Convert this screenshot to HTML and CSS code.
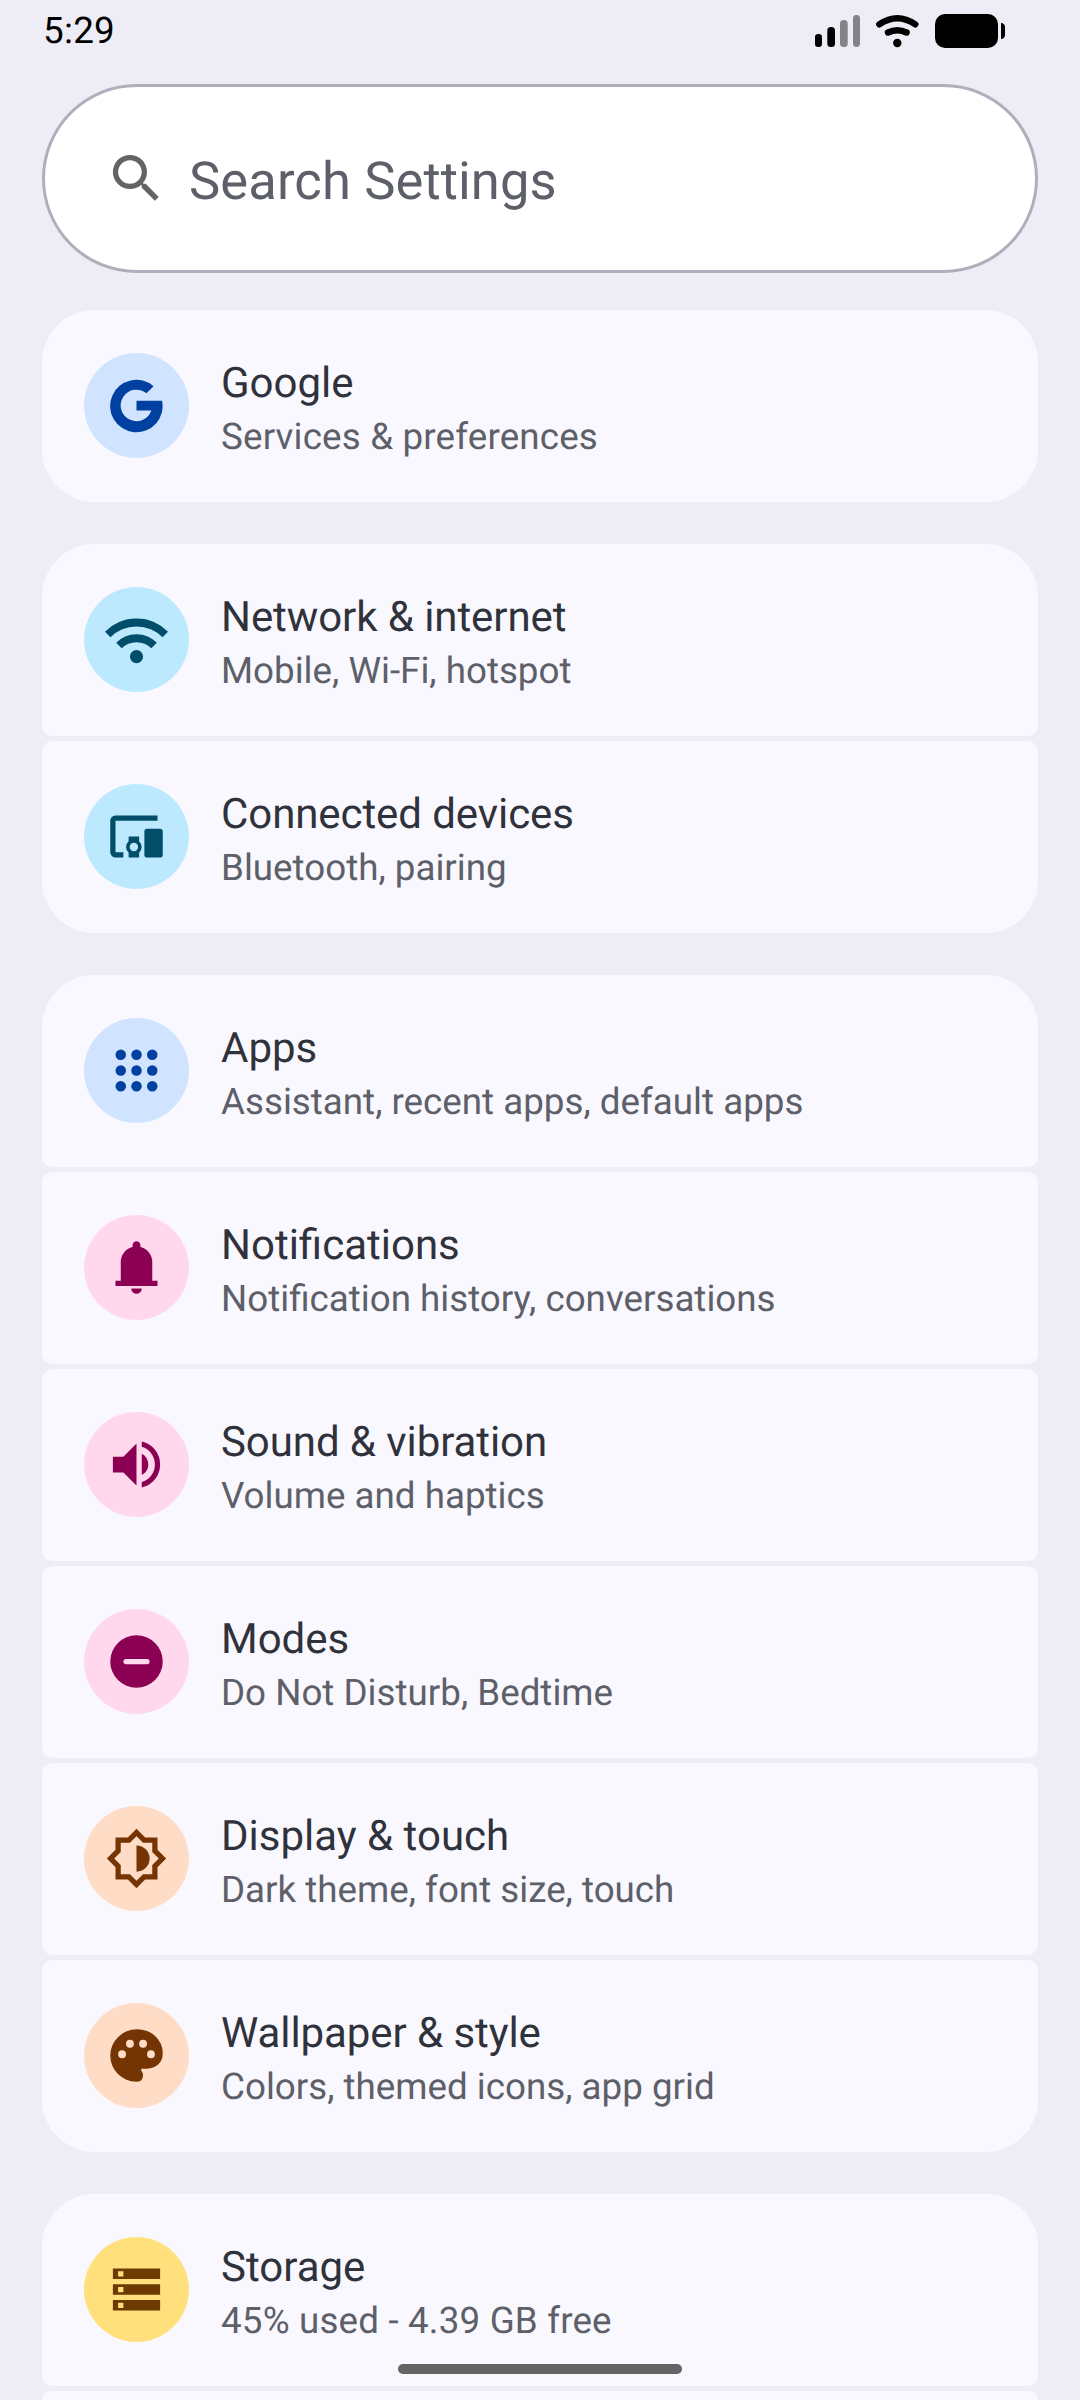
FILE: index.html
```html
<!DOCTYPE html>
<html lang="en">
<head>
<meta charset="utf-8">
<title>Settings</title>
<link rel="stylesheet" href="styles.css">
</head>
<body>
<header class="status">
  <span class="clock">5:29</span>
  <svg class="status-icons" viewBox="0 0 192 36" aria-hidden="true">
    <rect x="0" y="20" width="7" height="13" rx="3.2"/>
    <rect x="12.300" y="13" width="7.700" height="20" rx="3.500"/>
    <g fill="#858388"><rect x="25" y="6" width="7.700" height="27" rx="3.500"/><rect x="38" y="1" width="7" height="32" rx="3.400"/></g>
    <g fill="none" stroke="#000" stroke-width="6.400" stroke-linecap="round"><path d="M64.300 10.300q18-12.300 36 0"/><path d="M73 18.500q9.300-4.500 18.600 0"/></g>
    <circle cx="82.300" cy="29" r="4.200"/>
    <rect x="120" y="0" width="63" height="34" rx="10"/>
    <path d="M186 9c2.500 0 4 2 4 4v8c0 2-1.500 4-4 4z"/>
  </svg>
</header>
<main class="page">
  <div class="search">
    <svg class="icon" viewBox="0 0 24 24"><path d="M15.500 14h-.79l-.28-.27A6.471 6.471 0 0 0 16 9.500 6.500 6.500 0 1 0 9.500 16c1.610 0 3.090-.59 4.230-1.570l.27.28v.79l5 4.990L20.490 19l-4.990-5zm-6 0C7.010 14 5 11.990 5 9.500S7.010 5 9.500 5 14 7.010 14 9.500 11.990 14 9.500 14z"/></svg>
    <span class="search-text">Search Settings</span>
  </div>

  <section class="group">
    <div class="row">
      <div class="badge blue"><svg class="icon" viewBox="0 0 24 24"><path d="M18.500 4.650 15.800 7.350A6 6 0 1 0 17.650 13.900H12V10.200H21.750A10 10 0 1 1 18.500 4.650Z"/></svg></div>
      <div class="text"><div class="title">Google</div><div class="sub sub-wide">Services &amp; preferences</div></div>
    </div>
  </section>

  <section class="group">
    <div class="row">
      <div class="badge cyan"><svg class="icon" viewBox="0 0 24 24"><path d="M12 21q-1.050 0-1.775-.725T9.500 18.500t.725-1.775T12 16t1.775.725.725 1.775-.725 1.775T12 21Zm-5.650-5.650-2.100-2.150q1.475-1.475 3.463-2.337T12 10t4.288.875T19.750 13.250l-2.100 2.100q-1.100-1.100-2.550-1.725T12 13t-3.100.625-2.550 1.725ZM2.100 11.100 0 9q2.300-2.350 5.375-3.675T12 4t6.625 1.325T24 9l-2.100 2.100q-1.925-1.925-4.463-3.012T12 7 6.563 8.088 2.100 11.100Z"/></svg></div>
      <div class="text"><div class="title title-tight">Network &amp; internet</div><div class="sub">Mobile, Wi-Fi, hotspot</div></div>
    </div>
    <div class="row">
      <div class="badge cyan"><svg class="icon" viewBox="0 0 24 24"><path fill-rule="evenodd" d="M20 6H4v12h3v2H4a2 2 0 0 1-2-2V6a2 2 0 0 1 2-2h16ZM9 12h4v1.800a3 3 0 0 1 0 4.400V20H9v-1.800a3 3 0 0 1 0-4.400ZM11 14.400a1.600 1.600 0 1 0 0 3.200 1.600 1.600 0 0 0 0-3.200ZM16 9h5c.6 0 1 .4 1 1v9c0 .6-.4 1-1 1h-5c-.6 0-1-.4-1-1v-9c0-.6.4-1 1-1Z"/></svg></div>
      <div class="text"><div class="title title-tight">Connected devices</div><div class="sub">Bluetooth, pairing</div></div>
    </div>
  </section>

  <section class="group">
    <div class="row">
      <div class="badge blue"><svg class="icon" viewBox="0 0 24 24"><circle cx="6" cy="6" r="2"/><circle cx="12" cy="6" r="2"/><circle cx="18" cy="6" r="2"/><circle cx="6" cy="12" r="2"/><circle cx="12" cy="12" r="2"/><circle cx="18" cy="12" r="2"/><circle cx="6" cy="18" r="2"/><circle cx="12" cy="18" r="2"/><circle cx="18" cy="18" r="2"/></svg></div>
      <div class="text"><div class="title">Apps</div><div class="sub">Assistant, recent apps, default apps</div></div>
    </div>
    <div class="row">
      <div class="badge pink"><svg class="icon" viewBox="0 0 24 24"><path d="M4 19v-2h2v-7q0-2.075 1.250-3.687T10.500 4.200v-.7q0-.625.438-1.062T12 2t1.063.438T13.500 3.500v.7q2 .5 3.250 2.113T18 10v7h2v2Zm8 3q-.825 0-1.412-.587T10 20h4q0 .825-.587 1.413T12 22Z"/></svg></div>
      <div class="text"><div class="title">Notifications</div><div class="sub">Notification history, conversations</div></div>
    </div>
    <div class="row">
      <div class="badge pink"><svg class="icon" viewBox="0 0 24 24"><path d="M14 20.725v-2.050q2.250-.65 3.625-2.500T19 11.975q0-2.350-1.375-4.200T14 5.275v-2.050q3.100.7 5.050 3.138T21 11.975q0 3.175-1.950 5.613T14 20.725ZM3 15V9h4l5-5v16l-5-5Zm11 1V7.950q1.175.55 1.838 1.650T16.500 12q0 1.275-.662 2.363T14 16Z"/></svg></div>
      <div class="text"><div class="title title-tight">Sound &amp; vibration</div><div class="sub">Volume and haptics</div></div>
    </div>
    <div class="row">
      <div class="badge pink"><svg class="icon" viewBox="0 0 24 24"><path fill-rule="evenodd" d="M12 2a10 10 0 1 0 0 20 10 10 0 0 0 0-20ZM8 11h8a1 1 0 0 1 0 2H8a1 1 0 0 1 0-2Z"/></svg></div>
      <div class="text"><div class="title">Modes</div><div class="sub">Do Not Disturb, Bedtime</div></div>
    </div>
    <div class="row">
      <div class="badge orange"><svg class="icon" viewBox="0 0 24 24"><path fill-rule="evenodd" d="M12 23.300 8.700 20H4v-4.700L.7 12 4 8.700V4h4.700L12 .7 15.300 4H20v4.700l3.300 3.300-3.300 3.300V20h-4.700ZM12 20.450 14.500 18H18v-3.500l2.500-2.500L18 9.500V6h-3.500L12 3.550 9.500 6H6v3.500L3.500 12 6 14.500V18h3.500Z"/><path d="M12 17V7a5 5 0 0 1 0 10Z"/></svg></div>
      <div class="text"><div class="title">Display &amp; touch</div><div class="sub">Dark theme, font size, touch</div></div>
    </div>
    <div class="row">
      <div class="badge orange"><svg class="icon" viewBox="0 0 24 24"><path d="M12 22q-2.050 0-3.875-.788t-3.187-2.150-2.150-3.187T2 12q0-2.075.813-3.900t2.200-3.175T8.250 2.788 12.200 2q2 0 3.775.688t3.113 1.900 2.125 2.875T22 11.050q0 2.875-1.750 4.413T16 17h-1.850q-.225 0-.312.125t-.088.275q0 .3.375.863t.375 1.287q0 1.250-.687 1.850T12 22Z"/><g class="hole"><circle cx="6.500" cy="11.500" r="1.500"/><circle cx="9.500" cy="7.500" r="1.500"/><circle cx="14.500" cy="7.500" r="1.500"/><circle cx="17.500" cy="11.500" r="1.500"/></g></svg></div>
      <div class="text"><div class="title title-tight">Wallpaper &amp; style</div><div class="sub">Colors, themed icons, app grid</div></div>
    </div>
  </section>

  <section class="group group-last">
    <div class="row">
      <div class="badge yellow"><svg class="icon" viewBox="0 0 24 24"><path fill-rule="evenodd" d="M3 4h18v4H3ZM5 5v2h2V5ZM3 10h18v4H3ZM5 11v2h2v-2ZM3 16h18v4H3ZM5 17v2h2v-2Z"/></svg></div>
      <div class="text"><div class="title">Storage</div><div class="sub sub-wide">45% used - 4.39 GB free</div></div>
    </div>
    <div class="row row-peek"></div>
  </section>
</main>
<div class="home-bar"></div>
</body>
</html>
```

FILE: styles.css
```css
* { box-sizing: border-box; }

html,
body {
  height: 2400px;
  margin: 0;
  overflow: hidden;
}

body {
  position: relative;
  background: #eeecf5;
  font-family: Roboto, sans-serif;
  text-rendering: geometricPrecision;
}

.status {
  display: flex;
  justify-content: space-between;
  height: 84px;
  padding: 14px 73px 0 43px;
}

.clock {
  margin-top: -5px;
  font-size: 36.75px;
  line-height: 44px;
  letter-spacing: 0.3px;
  color: #000;
}

.status-icons {
  width: 192px;
  height: 36px;
}

.page {
  padding: 0 42px;
}

.search {
  display: flex;
  align-items: center;
  height: 189px;
  padding-left: 60px;
  border: 3px solid #afaebc;
  border-radius: 95px;
  background: #fff;
  color: #646464;
  margin-bottom: 37px;
}

.search .icon {
  flex: none;
}

.search-text {
  margin: 4px 0 0 21px;
  font-size: 52.5px;
  line-height: 62px;
  letter-spacing: 0.12px;
  color: #5d5f69;
}

.icon {
  display: block;
  width: 63px;
  height: 63px;
  fill: currentColor;
}

.group {
  display: flex;
  flex-direction: column;
  gap: 5px;
  margin-bottom: 42px;
}

.group-last {
  margin-bottom: 0;
}

.row {
  display: flex;
  flex: none;
  height: 192px;
  padding: 43px 42px 0;
  border-radius: 10.5px;
  background: #faf8ff;
}

.row:first-child {
  border-top-left-radius: 52.5px;
  border-top-right-radius: 52.5px;
}

.row:last-child {
  border-bottom-left-radius: 52.5px;
  border-bottom-right-radius: 52.5px;
}

.row.row-peek {
  height: 9px;
  padding: 0;
  border-radius: 10.5px 10.5px 0 0;
}

.badge {
  display: grid;
  place-items: center;
  flex: none;
  width: 105px;
  height: 105px;
  border-radius: 50%;
}

.blue { background: #d0e4ff; color: #0040a1; }
.cyan { background: #bde9ff; color: #004e69; }
.pink { background: #ffd8ee; color: #8c0053; }
.orange { background: #ffdcc5; color: #753403; }
.yellow { background: #ffe07c; color: #6d3a01; }
.hole { fill: #ffdcc5; }

.text {
  margin: 6px 0 0 32px;
  white-space: nowrap;
}

.title {
  font-size: 42px;
  line-height: 50px;
  color: #2f323b;
}

.title-tight {
  letter-spacing: -0.08px;
}

.sub {
  margin-top: 3px;
  font-size: 36.75px;
  line-height: 50px;
  color: #5d5f69;
}

.sub-wide {
  letter-spacing: 0.17px;
}

.home-bar {
  position: absolute;
  left: 398px;
  top: 2364px;
  width: 284px;
  height: 10px;
  border-radius: 5px;
  background: #646464;
}
```
